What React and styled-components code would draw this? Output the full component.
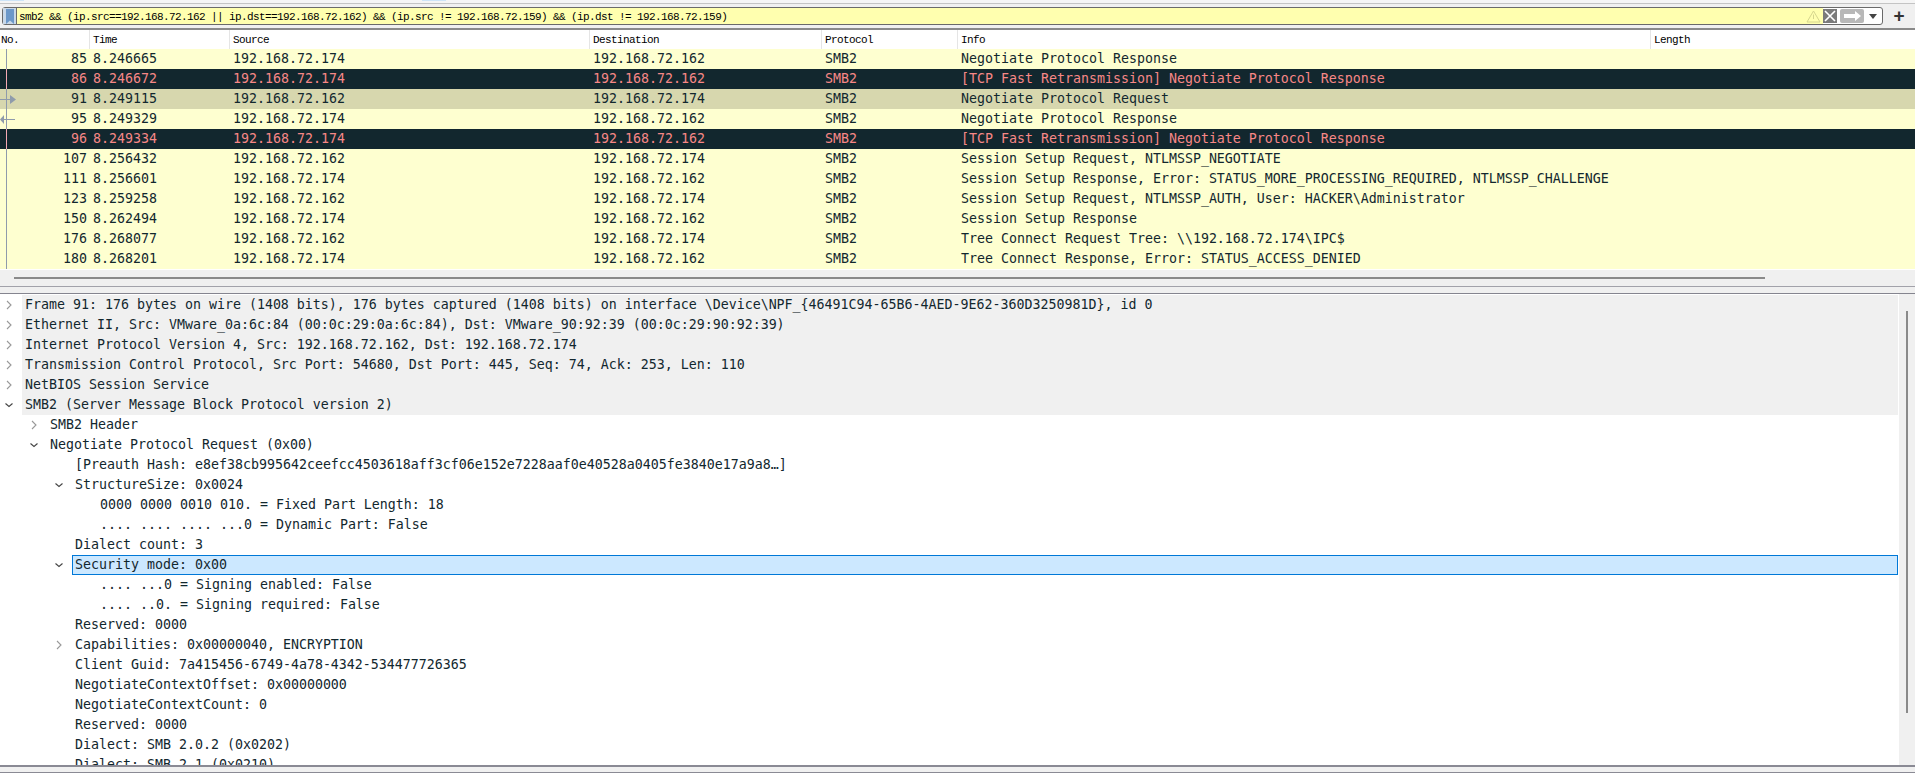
import styled, { createGlobalStyle } from "styled-components";

const columns = "90px 140px 360px 232px 136px 693px 1fr";

const packets = [
    { no: 85, time: "8.246665", src: "192.168.72.174", dst: "192.168.72.162", info: "Negotiate Protocol Response" },
    { no: 86, time: "8.246672", src: "192.168.72.174", dst: "192.168.72.162", info: "[TCP Fast Retransmission] Negotiate Protocol Response", kind: "bad" },
    { no: 91, time: "8.249115", src: "192.168.72.162", dst: "192.168.72.174", info: "Negotiate Protocol Request", kind: "current", mark: "out" },
    { no: 95, time: "8.249329", src: "192.168.72.174", dst: "192.168.72.162", info: "Negotiate Protocol Response", mark: "in" },
    { no: 96, time: "8.249334", src: "192.168.72.174", dst: "192.168.72.162", info: "[TCP Fast Retransmission] Negotiate Protocol Response", kind: "bad" },
    { no: 107, time: "8.256432", src: "192.168.72.162", dst: "192.168.72.174", info: "Session Setup Request, NTLMSSP_NEGOTIATE" },
    { no: 111, time: "8.256601", src: "192.168.72.174", dst: "192.168.72.162", info: "Session Setup Response, Error: STATUS_MORE_PROCESSING_REQUIRED, NTLMSSP_CHALLENGE" },
    { no: 123, time: "8.259258", src: "192.168.72.162", dst: "192.168.72.174", info: "Session Setup Request, NTLMSSP_AUTH, User: HACKER\\Administrator" },
    { no: 150, time: "8.262494", src: "192.168.72.174", dst: "192.168.72.162", info: "Session Setup Response" },
    { no: 176, time: "8.268077", src: "192.168.72.162", dst: "192.168.72.174", info: "Tree Connect Request Tree: \\\\192.168.72.174\\IPC$" },
    { no: 180, time: "8.268201", src: "192.168.72.174", dst: "192.168.72.162", info: "Tree Connect Response, Error: STATUS_ACCESS_DENIED" },
];

const details = [
    { depth: 0, toggle: "closed", shaded: true, text: "Frame 91: 176 bytes on wire (1408 bits), 176 bytes captured (1408 bits) on interface \\Device\\NPF_{46491C94-65B6-4AED-9E62-360D3250981D}, id 0" },
    { depth: 0, toggle: "closed", shaded: true, text: "Ethernet II, Src: VMware_0a:6c:84 (00:0c:29:0a:6c:84), Dst: VMware_90:92:39 (00:0c:29:90:92:39)" },
    { depth: 0, toggle: "closed", shaded: true, text: "Internet Protocol Version 4, Src: 192.168.72.162, Dst: 192.168.72.174" },
    { depth: 0, toggle: "closed", shaded: true, text: "Transmission Control Protocol, Src Port: 54680, Dst Port: 445, Seq: 74, Ack: 253, Len: 110" },
    { depth: 0, toggle: "closed", shaded: true, text: "NetBIOS Session Service" },
    { depth: 0, toggle: "open", shaded: true, text: "SMB2 (Server Message Block Protocol version 2)" },
    { depth: 1, toggle: "closed", text: "SMB2 Header" },
    { depth: 1, toggle: "open", text: "Negotiate Protocol Request (0x00)" },
    { depth: 2, text: "[Preauth Hash: e8ef38cb995642ceefcc4503618aff3cf06e152e7228aaf0e40528a0405fe3840e17a9a8…]" },
    { depth: 2, toggle: "open", text: "StructureSize: 0x0024" },
    { depth: 3, text: "0000 0000 0010 010. = Fixed Part Length: 18" },
    { depth: 3, text: ".... .... .... ...0 = Dynamic Part: False" },
    { depth: 2, text: "Dialect count: 3" },
    { depth: 2, toggle: "open", selected: true, text: "Security mode: 0x00" },
    { depth: 3, text: ".... ...0 = Signing enabled: False" },
    { depth: 3, text: ".... ..0. = Signing required: False" },
    { depth: 2, text: "Reserved: 0000" },
    { depth: 2, toggle: "closed", text: "Capabilities: 0x00000040, ENCRYPTION" },
    { depth: 2, text: "Client Guid: 7a415456-6749-4a78-4342-534477726365" },
    { depth: 2, text: "NegotiateContextOffset: 0x00000000" },
    { depth: 2, text: "NegotiateContextCount: 0" },
    { depth: 2, text: "Reserved: 0000" },
    { depth: 2, text: "Dialect: SMB 2.0.2 (0x0202)" },
    { depth: 2, text: "Dialect: SMB 2.1 (0x0210)" },
];

const RelatedMark = ({ kind, mark }) => (
    <MarkSvg width="18" height="20" viewBox="0 0 18 20">
        <line x1="6.5" y1="0" x2="6.5" y2="20" stroke={kind === "bad" ? "#f4a9b4" : "#8f9bab"} />
        {mark === "out" && (
            <>
                <line x1="0" y1="10.5" x2="11" y2="10.5" stroke="#8f9bab" />
                <polygon points="10,6 16,10.5 10,15" fill="#8f9bab" />
            </>
        )}
        {mark === "in" && (
            <>
                <line x1="3" y1="10.5" x2="15" y2="10.5" stroke="#8f9bab" />
                <polygon points="4,6 0,10.5 4,15" fill="#8f9bab" />
            </>
        )}
    </MarkSvg>
);

const Chevron = ({ open }) => (
    <svg width="10" height="10" viewBox="0 0 10 10" fill="none">
        {open
            ? <polyline points="1.5,3.5 5,6.5 8.5,3.5" stroke="#444" strokeWidth="1.1" />
            : <polyline points="3,1 7,5 3,9" stroke="#999" strokeWidth="1.1" />}
    </svg>
);

const App = () => {
    return (
        <>
        <GlobalStyle />
        <Window>
            <TopStrip>
                <TopTab />
                <TopTab />
            </TopStrip>
            <FilterBar>
                <FilterBox>
                    <BookmarkButton>
                        <svg width="10" height="15" viewBox="0 0 10 15">
                            <path d="M1 0H9V15L5 11.5L1 15Z" fill="#6c98c9" />
                        </svg>
                    </BookmarkButton>
                    <FilterInput>
                        <span>smb2 &amp;&amp; (ip.src==192.168.72.162 || ip.dst==192.168.72.162) &amp;&amp; (ip.src != 192.168.72.159) &amp;&amp; (ip.dst != 192.168.72.159)</span>
                        <svg width="15" height="13" viewBox="0 0 15 13" fill="none">
                            <path d="M7.5 1L14 12H1Z" stroke="#d6d68e" />
                            <line x1="7.5" y1="4.5" x2="7.5" y2="9" stroke="#d6d68e" />
                        </svg>
                    </FilterInput>
                    <ClearButton>
                        <svg width="12" height="12" viewBox="0 0 12 12">
                            <path d="M1 1L11 11M11 1L1 11" stroke="#fff" strokeWidth="1.6" />
                        </svg>
                    </ClearButton>
                    <ApplyButton>
                        <svg width="17" height="10" viewBox="0 0 17 10">
                            <path d="M0 3H11V0L17 5L11 10V7H0Z" fill="#fff" />
                        </svg>
                    </ApplyButton>
                    <DropButton>
                        <svg width="8" height="5" viewBox="0 0 8 5">
                            <path d="M0 0H8L4 5Z" fill="#444" />
                        </svg>
                    </DropButton>
                </FilterBox>
                <PlusButton>+</PlusButton>
            </FilterBar>

            <HeaderRow>
                <HeaderCell>No.</HeaderCell>
                <HeaderCell>Time</HeaderCell>
                <HeaderCell>Source</HeaderCell>
                <HeaderCell>Destination</HeaderCell>
                <HeaderCell>Protocol</HeaderCell>
                <HeaderCell>Info</HeaderCell>
                <HeaderCell>Length</HeaderCell>
            </HeaderRow>

            <div>
                {packets.map((p) => (
                    <PacketRow key={p.no} $kind={p.kind}>
                        <NoCell>
                            <RelatedMark kind={p.kind} mark={p.mark} />
                            {p.no}
                        </NoCell>
                        <Cell>{p.time}</Cell>
                        <Cell>{p.src}</Cell>
                        <Cell>{p.dst}</Cell>
                        <Cell>SMB2</Cell>
                        <Cell>{p.info}</Cell>
                        <Cell />
                    </PacketRow>
                ))}
            </div>

            <Splitter>
                <HScrollThumb />
            </Splitter>

            <DetailPane>
                <DetailList>
                    {details.map((d, i) => (
                        <DetailRow key={i} $depth={d.depth}>
                            <Toggle>{d.toggle && <Chevron open={d.toggle === "open"} />}</Toggle>
                            <DetailLabel $shaded={d.shaded} $selected={d.selected}>{d.text}</DetailLabel>
                        </DetailRow>
                    ))}
                </DetailList>
                <VScroll>
                    <VScrollThumb />
                </VScroll>
            </DetailPane>

            <Footer />
        </Window>
        </>
    );
};

const GlobalStyle = createGlobalStyle`
    html, body {
        margin: 0;
        padding: 0;
        overflow: hidden;
        background: #f0f0f0;
    }
`;

const Window = styled.div`
    height: 773px;
    display: flex;
    flex-direction: column;
    background: #f0f0f0;
    overflow: hidden;
    font-family: "DejaVu Sans Mono", monospace;
    font-size: 13.29px;
    color: #12272e;
`;

const TopStrip = styled.div`
    height: 3px;
    flex: none;
    display: flex;
    gap: 398px;
    background: #f5f5f5;
    border-bottom: 1px solid #c4c4c4;
`;

const TopTab = styled.div`
    width: 24px;
    height: 1px;
    background: #cde4f7;
`;

const FilterBar = styled.div`
    height: 21px;
    flex: none;
    padding: 3px 0 0 2px;
    display: flex;
    align-items: flex-start;
    border-bottom: 2px solid #8a8a8a;
`;

const FilterBox = styled.div`
    width: 1881px;
    height: 18px;
    box-sizing: border-box;
    display: flex;
    align-items: stretch;
    border: 1px solid #6a6a6a;
    border-radius: 3px;
    background: #fff;
`;

const BookmarkButton = styled.div`
    width: 13px;
    display: flex;
    align-items: center;
    justify-content: center;
    background: #c9d8e8;
`;

const FilterInput = styled.div`
    flex: 1;
    display: flex;
    align-items: center;
    justify-content: space-between;
    padding: 1px 2px 0 2px;
    background: #ffffaf;
    border-left: 1px solid #6a6a6a;
    font-family: "Liberation Mono", monospace;
    font-size: 11px;
    letter-spacing: -0.6px;
    color: #000;
`;

const ClearButton = styled.div`
    width: 14px;
    margin: 1px 0;
    display: flex;
    align-items: center;
    justify-content: center;
    background: #7a7a7a;
`;

const ApplyButton = styled.div`
    width: 24px;
    margin: 1px 0 1px 3px;
    display: flex;
    align-items: center;
    justify-content: center;
    background: #b8b8b8;
    border-radius: 2px;
`;

const DropButton = styled.div`
    width: 18px;
    padding-left: 5px;
    box-sizing: border-box;
    display: flex;
    align-items: center;
`;

const PlusButton = styled.div`
    width: 32px;
    height: 18px;
    line-height: 17px;
    text-align: center;
    font-family: "Liberation Sans", sans-serif;
    font-size: 19px;
    font-weight: 700;
    color: #333;
`;

const HeaderRow = styled.div`
    display: grid;
    grid-template-columns: ${columns};
    height: 19px;
    flex: none;
    background: #fff;
`;

const HeaderCell = styled.div`
    padding-left: 3px;
    line-height: 20px;
    border-right: 1px solid #e5e5e5;
    font-family: "Liberation Mono", monospace;
    font-size: 11px;
    letter-spacing: -0.6px;
    color: #000;

    &:first-child {
        padding-left: 1px;
    }

    &:last-child {
        border-right: none;
    }
`;

const rowColors = {
    bad: { bg: "#12272e", fg: "#f78787" },
    current: { bg: "#d7d7ae", fg: "#12272e" },
};

const PacketRow = styled.div`
    display: grid;
    grid-template-columns: ${columns};
    height: 20px;
    line-height: 20px;
    background: ${(p) => (rowColors[p.$kind] ? rowColors[p.$kind].bg : "#feffd0")};
    color: ${(p) => (rowColors[p.$kind] ? rowColors[p.$kind].fg : "#12272e")};
`;

const Cell = styled.div`
    padding-left: 3px;
    white-space: nowrap;
`;

const NoCell = styled.div`
    position: relative;
    padding-right: 3px;
    text-align: right;
`;

const MarkSvg = styled.svg`
    position: absolute;
    left: 0;
    top: 0;
`;

const Splitter = styled.div`
    height: 25px;
    flex: none;
    box-sizing: border-box;
    padding-top: 7px;
    padding-left: 14px;
    border-top: 1px solid #fff;
    border-bottom: 1px solid #85858f;
    background: #f0f0f0;

    &::after {
        content: "";
        display: block;
        margin: 7px 0 0 -14px;
        border-top: 1px solid #a2a2aa;
    }
`;

const HScrollThumb = styled.div`
    width: 1751px;
    height: 2px;
    background: #8a8a8a;
`;

const DetailPane = styled.div`
    flex: 1;
    min-height: 0;
    display: flex;
    background: #fff;
    padding-top: 1px;
`;

const DetailList = styled.div`
    flex: 1;
    min-width: 0;
    overflow: hidden;
    margin-right: 1px;
`;

const DetailRow = styled.div`
    height: 20px;
    padding-left: ${(p) => p.$depth * 25}px;
    display: flex;
    align-items: stretch;
`;

const Toggle = styled.div`
    width: 22px;
    flex: none;
    padding-left: 4px;
    box-sizing: border-box;
    display: flex;
    align-items: center;
`;

const DetailLabel = styled.div`
    flex: 1;
    box-sizing: border-box;
    padding-left: 3px;
    line-height: 20px;
    white-space: nowrap;
    color: #12272e;
    background: ${(p) => (p.$selected ? "#cce8ff" : p.$shaded ? "#f0f0f0" : "transparent")};
    ${(p) => p.$selected && "border: 1px solid #0078d7; padding-left: 2px; line-height: 18px;"}
`;

const VScroll = styled.div`
    width: 16px;
    margin-top: -1px;
    padding: 17px 0 0 7px;
    box-sizing: border-box;
    background: #f0f0f0;
`;

const VScrollThumb = styled.div`
    width: 2px;
    height: 402px;
    background: #8a8a8a;
`;

const Footer = styled.div`
    height: 8px;
    flex: none;
    box-sizing: border-box;
    border-top: 2px solid #8a8a94;
    border-bottom: 1px solid #8a8a94;
    background: #f0f0f0;
`;

export default App;
